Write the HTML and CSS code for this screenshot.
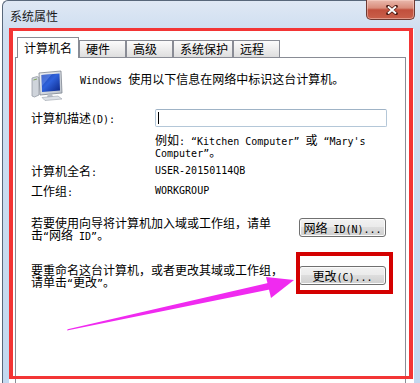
FILE: index.html
```html
<!DOCTYPE html>
<html lang="zh-CN">
<head>
<meta charset="utf-8">
<title>系统属性</title>
<link rel="stylesheet" href="styles.css">
</head>
<body>
<div class="window">
  <div class="titlebar">
    <span class="title">系统属性</span>
    <div class="close">
      <svg width="12" height="10" viewBox="0 0 12 10">
        <path d="M2 1.5 L10 8.5 M10 1.5 L2 8.5" stroke="#4a1810" stroke-width="3.6" stroke-linecap="round"/>
        <path d="M2 1.5 L10 8.5 M10 1.5 L2 8.5" stroke="#fff" stroke-width="2"/>
      </svg>
    </div>
  </div>
  <div class="client">
    <div class="tabs">
      <div class="tab active">计算机名</div>
      <div class="tab">硬件</div>
      <div class="tab">高级</div>
      <div class="tab">系统保护</div>
      <div class="tab">远程</div>
    </div>
    <div class="panel">
      <div class="intro">
        <svg class="pc" width="32" height="32" viewBox="0 0 32 32">
          <defs>
            <linearGradient id="scr" x1="0" y1="0" x2="1" y2="1">
              <stop offset="0" stop-color="#1b3aa0"/>
              <stop offset="0.45" stop-color="#2f62dc"/>
              <stop offset="1" stop-color="#0b2687"/>
            </linearGradient>
            <linearGradient id="frm" x1="0" y1="0" x2="1" y2="1">
              <stop offset="0" stop-color="#f1f3f6"/>
              <stop offset="1" stop-color="#b9c0ca"/>
            </linearGradient>
          </defs>
          <path d="M1 9 L6 7.5 L8 8.5 L8 26 L3.5 28 L1 27 Z" fill="#cfd4db" stroke="#8a919c" stroke-width="0.7"/>
          <path d="M2.5 11 L6 10" stroke="#7fa35a" stroke-width="1"/>
          <path d="M8 4 L30 2 L31 24 L9 26 Z" fill="url(#frm)" stroke="#7d8590" stroke-width="0.8"/>
          <path d="M10.5 6 L28.5 4.5 L29 21.5 L11 23 Z" fill="url(#scr)"/>
          <path d="M10.5 6 L21 5.1 L11 17 Z" fill="#6b92ef" opacity="0.55"/>
          <path d="M17 25 L21 24.8 L22 28 L16 28.2 Z" fill="#b8bec7"/>
          <path d="M11 28.5 L27 27 L31 30 L14 31.5 Z" fill="#dde1e7" stroke="#9aa1ab" stroke-width="0.6"/>
        </svg>
        <p class="intro-text"><span class="m">Windows </span>使用以下信息在网络中标识这台计算机。</p>
      </div>
      <div class="row desc">
        <span class="lbl">计算机描述<span class="m">(D):</span></span>
        <div class="input"><span class="caret"></span></div>
      </div>
      <p class="example">例如<span class="m">: “Kitchen Computer” </span>或<span class="m"> “Mary's Computer”</span>。</p>
      <div class="row fullname">
        <span class="lbl">计算机全名<span class="m">:</span></span>
        <span class="m">USER-20150114QB</span>
      </div>
      <div class="row workgroup">
        <span class="lbl">工作组<span class="m">:</span></span>
        <span class="m">WORKGROUP</span>
      </div>
      <div class="action first">
        <p class="action-text">若要使用向导将计算机加入域或工作组，请单<br>击<span class="m">“</span>网络<span class="m"> ID”</span>。</p>
        <div class="btn">网络<span class="m"> ID(N)...</span></div>
      </div>
      <div class="action second">
        <p class="action-text">要重命名这台计算机，或者更改其域或工作组，<br>请单击<span class="m">“</span>更改<span class="m">”</span>。</p>
        <div class="btn">更改<span class="m">(C)...</span></div>
      </div>
    </div>
  </div>
</div>
<div class="mark-outer"></div>
<div class="mark-btn"></div>
<svg class="arrow" width="420" height="383" viewBox="0 0 420 383">
  <polygon points="67,330.6 67.6,329.2 268,283 269.6,289.6" fill="#f02af0"/>
  <polygon points="294,280 266,277 271,298" fill="#f02af0"/>
</svg>
</body>
</html>
```

FILE: styles.css
```css
html {
  overflow: hidden;
}

body {
  margin: 0;
  width: 420px;
  height: 383px;
  overflow: hidden;
  background: #ffffff;
  font-family: "Noto Sans CJK SC", sans-serif;
  font-size: 12px;
  line-height: 12px;
  color: #000;
}

p {
  margin: 0;
}

.m {
  font-family: "DejaVu Sans Mono", "Liberation Mono", monospace;
  font-size: 10px;
  line-height: 8px;
}

.window {
  display: flex;
  flex-direction: column;
  margin-left: 2px;
  width: 419px;
  height: 382px;
  border-top: 1px solid #58677a;
  border-left: 1px solid #58677a;
  border-radius: 6px 0 0 0;
  background: linear-gradient(#dfe8f4 0, #cfdef0 30px, #c3d8ef 100%);
}

.titlebar {
  flex: none;
  display: flex;
  align-items: flex-start;
  height: 28px;
}

.title {
  margin: 9px 0 0 7px;
  color: #1a1a1a;
}

.close {
  margin: -1px 7px 0 auto;
  width: 49px;
  height: 20px;
  box-sizing: border-box;
  border: 1px solid #6e3a33;
  border-top: 0;
  border-radius: 0 0 5px 5px;
  background: linear-gradient(#e9b9ad 0%, #d98c7b 42%, #c14f3c 52%, #c9604b 100%);
  box-shadow: inset 0 0 0 1px rgba(255, 220, 210, 0.45);
  display: flex;
  align-items: center;
  justify-content: center;
  padding-left: 3px;
}

.client {
  flex: 1;
  min-height: 0;
  display: flex;
  flex-direction: column;
  margin: 0 8px 0 6px;
  background: #fff;
  padding: 8px 8px 0 6px;
}

.tabs {
  flex: none;
  display: flex;
  align-items: flex-end;
  height: 20px;
  padding-left: 2px;
}

.tab {
  height: 17px;
  min-width: 47px;
  box-sizing: border-box;
  padding: 2px 4px 0 6px;
  border: 1px solid #898c95;
  border-bottom: 0;
  background: linear-gradient(#fbfbfb, #ededed 50%, #dedede);
  white-space: nowrap;
}

.tab.active {
  position: relative;
  z-index: 1;
  height: 21px;
  min-width: 0;
  padding: 4px 6px 0 6px;
  margin-bottom: -1px;
  background: #fff;
}

.panel {
  flex: 1;
  min-height: 0;
  border: 1px solid #898c95;
  border-bottom: 0;
  background: #fff;
  padding-left: 15px;
}

.intro {
  display: flex;
  margin-top: 11px;
}

.pc {
  flex: none;
}

.intro-text {
  margin-left: 17px;
  padding-top: 4px;
}

.row {
  display: flex;
  align-items: center;
}

.lbl {
  flex: none;
  width: 124px;
}

.desc {
  margin-top: 8px;
}

.input {
  width: 232px;
  height: 18px;
  box-sizing: border-box;
  border: 1px solid #b4c7d8;
  border-top-color: #9fb3c6;
  border-radius: 2px;
  display: flex;
  align-items: center;
  padding-left: 2px;
}

.caret {
  width: 1px;
  height: 12px;
  background: #000;
}

.example {
  margin: 7px 0 0 124px;
  width: 232px;
}

.fullname {
  margin-top: 7px;
}

.workgroup {
  margin-top: 8px;
}

.action {
  display: flex;
  align-items: flex-start;
}

.action.first {
  margin-top: 20px;
}

.action.second {
  margin-top: 23px;
}

.action-text {
  flex: none;
  width: 268px;
}

.btn {
  width: 87px;
  height: 19px;
  box-sizing: border-box;
  border: 1px solid #707070;
  border-radius: 3px;
  background: linear-gradient(#f2f2f2 0, #ebebeb 45%, #dddddd 50%, #cfcfcf 100%);
  box-shadow: inset 0 0 0 1px #fbfbfb;
  padding-top: 3px;
  text-align: center;
  white-space: nowrap;
}

.action.first .btn {
  margin-top: 1px;
}

.action.second .btn {
  margin-top: 2px;
}

.mark-outer {
  position: absolute;
  left: 9px;
  top: 28px;
  width: 404px;
  height: 351px;
  box-sizing: border-box;
  border: solid #f33535;
  border-width: 3px 4px;
}

.mark-btn {
  position: absolute;
  left: 296px;
  top: 252px;
  width: 97px;
  height: 42px;
  box-sizing: border-box;
  border: 4px solid #d40000;
}

.arrow {
  position: absolute;
  left: 0;
  top: 0;
  pointer-events: none;
}
```
